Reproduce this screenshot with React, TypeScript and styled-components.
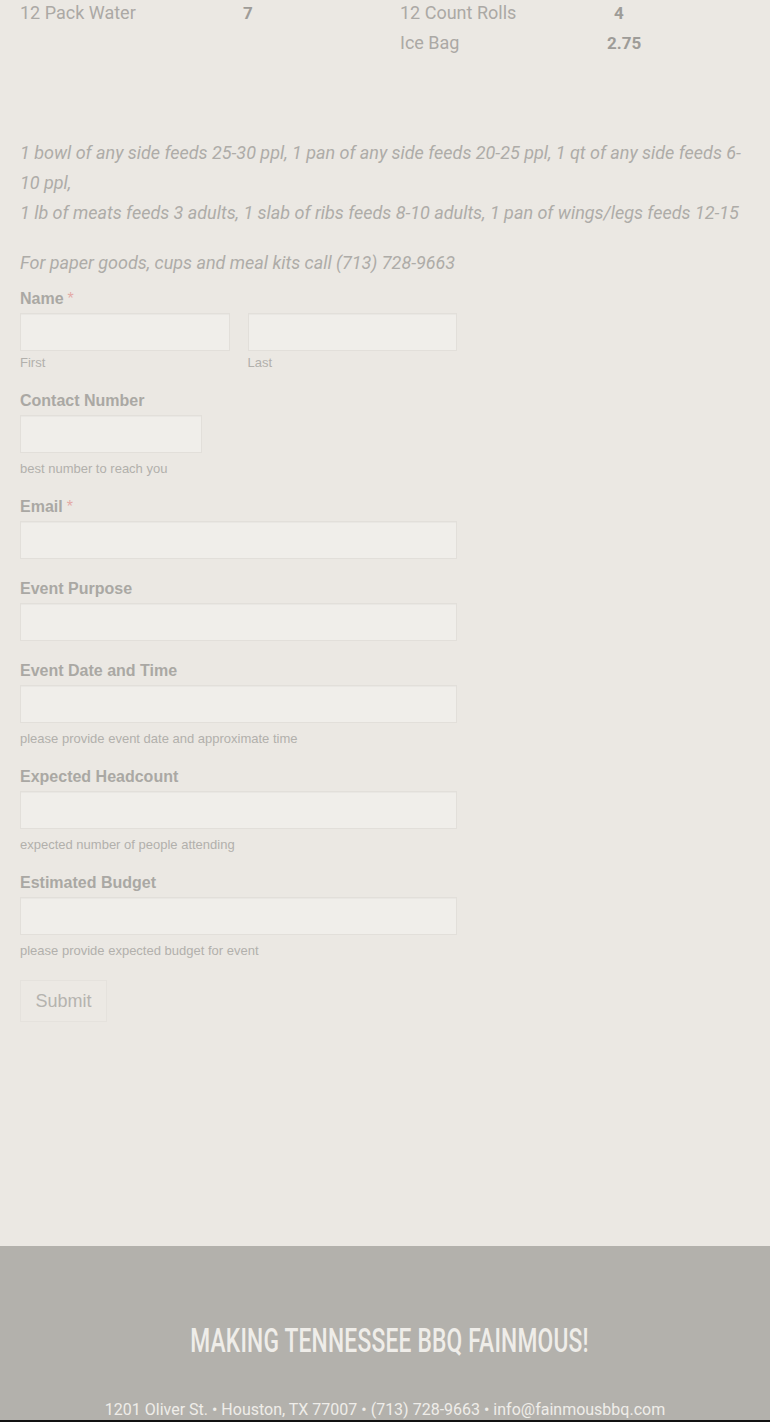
import React from "react";
import styled, { createGlobalStyle } from "styled-components";

const Global = createGlobalStyle`
  html, body { margin: 0; padding: 0; background: #ebe8e3; }
  body { font-family: Roboto, "Liberation Sans", sans-serif; }
  * { box-sizing: border-box; }
`;

const Page = styled.div`
  width: 770px;
  height: 1422px;
  display: flex;
  flex-direction: column;
  background: #ebe8e3;
  overflow: hidden;
`;

const Main = styled.main`
  flex: 1;
  padding: 0 20px;
`;

const PriceGrid = styled.div`
  display: grid;
  grid-template-columns: 380px 1fr;
  margin-top: -2px;
`;

const PriceCol = styled.div`
  display: flex;
  flex-direction: column;
`;

const PriceRow = styled.div<{ $nameW: number }>`
  display: grid;
  grid-template-columns: ${(p) => p.$nameW}px auto;
  height: 30px;
  line-height: 30px;
  font-size: 18px;
  color: #aba9a5;
`;

const PriceValue = styled.span<{ $indent?: number }>`
  font-weight: 700;
  font-size: 17px;
  color: #9e9c98;
  padding-left: ${(p) => p.$indent ?? 0}px;
`;

const Notes = styled.div`
  margin-top: 80px;
  font-family: Roboto, sans-serif;
  font-style: italic;
  font-weight: 400;
  font-size: 18px;
  line-height: 30px;
  color: #aeaca8;
  letter-spacing: -0.02px;
`;

const Note = styled.p<{ $gap?: number }>`
  margin: ${(p) => p.$gap ?? 0}px 0 0;
`;

const Form = styled.form`
  margin-top: 11px;
  width: 437px;
  font-family: "Liberation Sans", Arial, sans-serif;
`;

const Field = styled.div`
  margin-bottom: 20px;
`;

const Label = styled.div`
  font-size: 16px;
  line-height: 19px;
  font-weight: 700;
  color: #aaa8a4;
  margin-bottom: 5px;
`;

const Req = styled.span`
  color: #e4aaa6;
  font-weight: 400;
  margin-left: 4px;
`;

const Input = styled.input<{ $w?: string }>`
  display: block;
  width: ${(p) => p.$w ?? "100%"};
  height: 38px;
  background: #f0eeea;
  border: 1px solid #e2dfda;
  box-shadow: inset 0 1px 1px rgba(0, 0, 0, 0.03);
  border-radius: 0;
  padding: 0 8px;
  font-size: 16px;
  outline: none;
`;

const NameRow = styled.div`
  display: grid;
  grid-template-columns: 1fr 1fr;
  gap: 18px;
`;

const Sub = styled.div<{ $gap?: number }>`
  margin-top: ${(p) => p.$gap ?? 8}px;
  font-size: 13px;
  line-height: 16px;
  color: #b2b0ac;
`;

const Submit = styled.button`
  margin-top: 1px;
  width: 87px;
  height: 42px;
  font-family: "Liberation Sans", Arial, sans-serif;
  font-size: 18px;
  color: #b5b3af;
  background: #ece9e4;
  border: 1px solid #e5e2dd;
  border-radius: 0;
  padding: 0;
`;

const Footer = styled.footer`
  height: 174px;
  background: #b3b1ac;
  display: flex;
  flex-direction: column;
  align-items: center;
  padding-top: 76px;
`;

const Headline = styled.div`
  margin-left: 8px;
  font-family: Roboto, sans-serif;
  font-weight: 500;
  font-size: 34px;
  line-height: 36px;
  color: #efede9;
  transform: scaleX(0.67);
  white-space: nowrap;
  letter-spacing: 0.3px;
`;

const Address = styled.div`
  margin-top: 42px;
  font-family: Roboto, sans-serif;
  font-size: 16px;
  line-height: 20px;
  color: #efede9;
  white-space: nowrap;
`;

const BottomBar = styled.div`
  height: 2px;
  background: #111;
`;

export default function App() {
  return (
    <Page>
      <Global />
      <Main>
        <PriceGrid>
          <PriceCol>
            <PriceRow $nameW={223}>
              <span>12 Pack Water</span>
              <PriceValue>7</PriceValue>
            </PriceRow>
          </PriceCol>
          <PriceCol>
            <PriceRow $nameW={207}>
              <span>12 Count Rolls</span>
              <PriceValue $indent={7}>4</PriceValue>
            </PriceRow>
            <PriceRow $nameW={207}>
              <span>Ice Bag</span>
              <PriceValue>2.75</PriceValue>
            </PriceRow>
          </PriceCol>
        </PriceGrid>

        <Notes>
          <Note>
            1 bowl of any side feeds 25-30 ppl, 1 pan of any side feeds 20-25 ppl, 1 qt of any side feeds 6-10 ppl,
          </Note>
          <Note>
            1 lb of meats feeds 3 adults, 1 slab of ribs feeds 8-10 adults, 1 pan of wings/legs feeds 12-15
          </Note>
          <Note $gap={20}>For paper goods, cups and meal kits call (713) 728-9663</Note>
        </Notes>

        <Form onSubmit={(e) => e.preventDefault()}>
          <Field>
            <Label>
              Name<Req>*</Req>
            </Label>
            <NameRow>
              <div>
                <Input />
                <Sub $gap={4}>First</Sub>
              </div>
              <div>
                <Input />
                <Sub $gap={4}>Last</Sub>
              </div>
            </NameRow>
          </Field>
          <Field>
            <Label>Contact Number</Label>
            <Input $w="182px" />
            <Sub>best number to reach you</Sub>
          </Field>
          <Field>
            <Label>
              Email<Req>*</Req>
            </Label>
            <Input />
          </Field>
          <Field>
            <Label>Event Purpose</Label>
            <Input />
          </Field>
          <Field>
            <Label>Event Date and Time</Label>
            <Input />
            <Sub>please provide event date and approximate time</Sub>
          </Field>
          <Field>
            <Label>Expected Headcount</Label>
            <Input />
            <Sub>expected number of people attending</Sub>
          </Field>
          <Field>
            <Label>Estimated Budget</Label>
            <Input />
            <Sub>please provide expected budget for event</Sub>
          </Field>
          <Submit type="submit">Submit</Submit>
        </Form>
      </Main>

      <Footer>
        <Headline>MAKING TENNESSEE BBQ FAINMOUS!</Headline>
        <Address>1201 Oliver St. • Houston, TX 77007 • (713) 728-9663 • info@fainmousbbq.com</Address>
      </Footer>
      <BottomBar />
    </Page>
  );
}
